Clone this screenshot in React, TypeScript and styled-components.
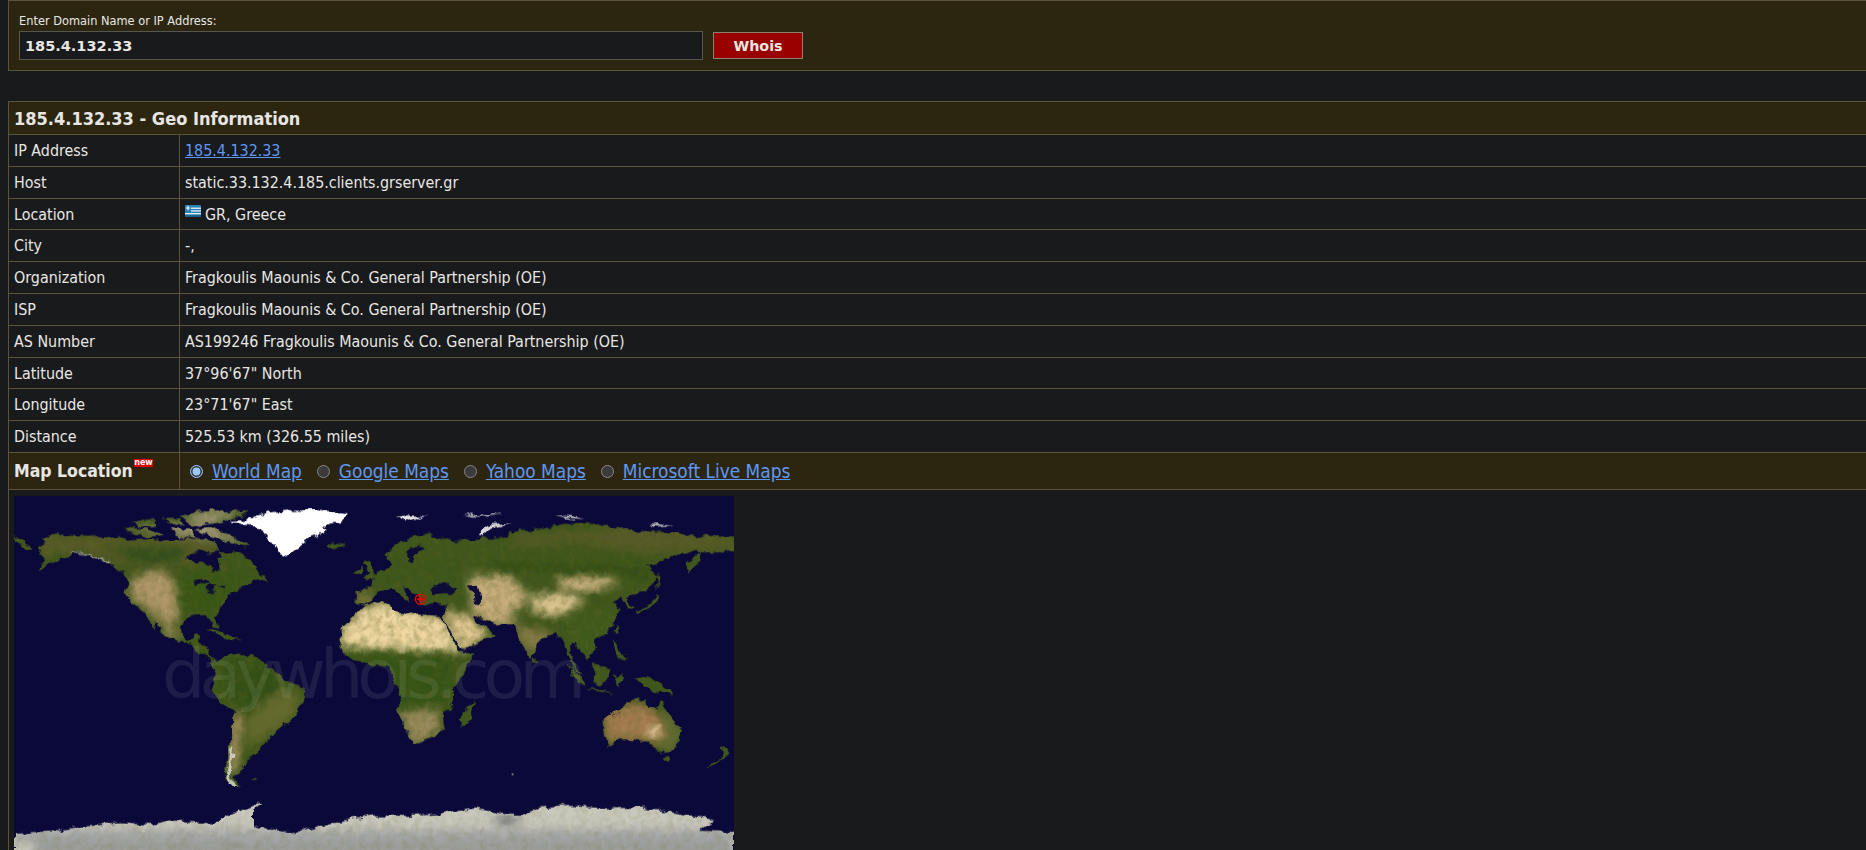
import React from "react";
import styled, { createGlobalStyle } from "styled-components";

const Global = createGlobalStyle`
  html, body { margin: 0; padding: 0; height: 850px; overflow: hidden; background: #181a1b; color-scheme: dark; }
`;

const bodyFont = `"DejaVu Sans Condensed", "DejaVu Sans", sans-serif`;
const line = "#5c5438";
const tan = "#2c2611";

const Page = styled.div`
  padding-left: 8px;
  color: #e8e6e3;
  font-family: ${bodyFont};
`;

const SearchPanel = styled.form`
  height: 71px;
  box-sizing: border-box;
  margin: 0 0 30px;
  padding: 14px 0 0 10px;
  background: ${tan};
  border: 1px solid ${line};
  border-right: 0;
`;

const FieldLabel = styled.label`
  display: block;
  height: 16px;
  font: 11.4px/13px "DejaVu Sans", sans-serif;
`;

const SearchRow = styled.div`
  display: flex;
  align-items: center;
  gap: 10px;
`;

const DomainInput = styled.input`
  width: 684px;
  height: 29px;
  box-sizing: border-box;
  padding: 0 0 0 5px;
  background: #181a1b;
  border: 1px solid #56564f;
  color: #e8e6e3;
  font: bold 14.5px "DejaVu Sans", sans-serif;
  outline: none;
`;

const WhoisButton = styled.button`
  width: 90px;
  height: 27px;
  padding: 0;
  background: #990000;
  border: 1px solid #8f7f70;
  color: #e8e6e3;
  font: bold 14.3px "DejaVu Sans", sans-serif;
`;

const GeoCard = styled.section`
  border-left: 1px solid ${line};
`;

const CardTitle = styled.h1`
  margin: 0;
  height: 34px;
  box-sizing: border-box;
  padding-left: 5px;
  background: ${tan};
  border-top: 1px solid ${line};
  border-bottom: 1px solid ${line};
  font: bold 18px/33px ${bodyFont};
`;

const InfoRow = styled.div`
  display: flex;
  height: 31.8px;
  box-sizing: border-box;
  border-bottom: 1px solid ${line};
  font-size: 15.9px;
  line-height: 31px;
`;

const KeyCell = styled.div`
  width: 171px;
  box-sizing: border-box;
  padding-left: 5px;
  border-right: 1px solid ${line};
`;

const ValueCell = styled.div`
  flex: 1;
  padding-left: 5px;
`;

const PlainLink = styled.a`
  color: #5f97f5;
  text-decoration: underline;
`;

const FlagIcon = styled.svg`
  width: 16px;
  height: 12px;
  margin-right: 4px;
  vertical-align: 3px;
`;

const MapRow = styled.div`
  display: flex;
  height: 37px;
  box-sizing: border-box;
  background: ${tan};
  border-bottom: 1px solid ${line};
`;

const MapKey = styled.div`
  position: relative;
  width: 171px;
  box-sizing: border-box;
  padding-left: 5px;
  border-right: 1px solid ${line};
  font: bold 17.5px/36px ${bodyFont};
`;

const NewBadge = styled.span`
  position: absolute;
  left: 125px;
  top: 6px;
  width: 19px;
  height: 8px;
  background: #e00000;
  color: #fff;
  font: bold 8px/7px "DejaVu Sans", sans-serif;
  text-align: center;
`;

const MapChoices = styled.div`
  display: flex;
  align-items: center;
  padding: 1px 0 0 10px;
  font-size: 18.9px;
`;

const MapChoice = styled.label`
  display: flex;
  align-items: center;
  margin-right: 15px;
`;

const MapRadio = styled.input`
  width: 13px;
  height: 13px;
  margin: 0 9px 0 0;
`;

const MapFrame = styled.div`
  padding: 6px 0 0 5px;
`;

const WorldSvg = styled.svg`
  display: block;
  width: 720px;
  height: 360px;
`;

type Frame = "NW" | "NE" | "SW" | "SE";
const frames: Record<Frame, string> = {
  NW: "translate(0 0)",
  NE: "translate(1080 0)",
  SW: "translate(0 525)",
  SE: "translate(1080 525)",
};

const ocean = "#0b0939";

const land: [Frame, string][] = [
  ["NW", "80,130 120,115 200,118 260,125 320,120 345,135 400,130 470,130 520,130 560,128 600,135 615,165 590,170 560,160 515,185 530,200 560,200 590,205 600,230 620,225 618,190 612,170 650,168 690,175 710,190 730,225 762,258 735,250 700,262 680,275 640,300 630,325 600,362 612,395 600,392 578,360 540,362 510,375 498,400 505,425 525,440 545,412 558,415 555,440 582,455 580,478 612,492 625,510 600,497 560,470 520,445 480,430 445,415 425,375 418,400 395,350 385,345 350,320 335,290 345,250 320,230 290,205 240,180 190,170 160,185 120,195 105,205 70,222 95,190 75,180 85,165 75,150 100,140"],
  ["NW", "0,125 30,135 60,150 40,155 0,140"],
  ["NW", "330,95 400,100 450,115 400,125 340,110"],
  ["NW", "345,82 420,68 425,90 380,92"],
  ["NW", "450,68 500,70 510,88 470,85"],
  ["NW", "470,100 530,100 540,125 500,125"],
  ["NW", "540,100 600,95 650,120 710,145 690,150 640,140 590,120"],
  ["NW", "500,60 560,45 640,45 705,45 680,60 620,80 530,92 520,75"],
  ["NW", "935,150 960,142 1000,148 985,155 955,160"],
  ["NW", "1020,230 1042,212 1045,232 1025,234"],
  ["NW", "1048,196 1065,190 1078,220 1080,245 1050,250 1062,228"],
  ["NW", "575,405 610,400 660,425 685,432 640,430 600,410"],
  ["NE", "-55,285 -20,278 -5,265 0,235 40,215 55,200 55,190 30,180 60,150 120,120 170,115 245,135 300,130 330,125 400,125 405,110 440,100 470,105 490,100 530,90 600,80 680,85 740,100 800,105 900,110 960,120 1020,120 1080,125 1080,165 1020,170 985,168 960,185 935,210 940,232 975,200 985,168 950,168 920,175 870,190 820,210 850,240 840,265 790,295 755,310 780,330 760,335 740,305 715,320 735,345 725,375 700,415 660,430 665,460 640,490 620,470 600,440 590,465 600,500 625,540 600,520 585,480 570,440 540,410 490,440 470,490 440,440 415,385 370,385 340,375 295,360 330,390 360,410 340,430 265,470 230,410 205,365 215,345 215,325 135,325 125,300 105,280 80,265 110,312 90,308 55,270 20,285 0,300 -25,325 -55,325"],
  ["NE", "-100,400 -60,360 -30,330 0,322 50,325 60,345 120,355 200,360 258,468 305,470 275,525 240,575 240,625 210,650 212,685 175,725 120,747 100,715 72,640 85,605 55,545 50,510 0,510 -20,500 -70,490 -100,455"],
  ["SW", "590,-20 650,-55 720,-45 780,0 830,30 870,55 865,85 835,150 790,170 745,230 700,265 680,300 660,320 685,345 650,345 630,320 640,260 655,170 660,125 620,95 595,50 605,10"],
  ["SE", "262,165 265,130 300,90 290,140 270,168"],
  ["SE", "682,150 730,125 760,95 790,85 815,90 825,115 850,110 858,85 880,125 920,175 915,210 885,245 850,245 825,215 790,205 740,205 700,225 690,190"],
  ["SE", "870,262 890,258 885,275 875,275"],
  ["SE", "1040,225 1070,245 1045,262 1003,295 1015,278 1045,258"],
  ["SE", "785,20 810,20 860,35 900,75 860,60 830,60 810,40"],
  ["SE", "582,-20 610,10 640,40 625,45 600,20"],
  ["SE", "630,50 680,60 720,68 680,66"],
  ["SE", "655,-20 710,-10 700,30 670,40 660,25"],
  ["SE", "720,15 750,10 735,45"],
  ["NE", "720,430 740,460 755,490 730,480"],
  ["NE", "785,345 830,325 850,290 852,310 835,330 790,352"],
  ["NE", "850,220 860,250 845,285 852,260"],
  ["NE", "480,480 490,500 478,505"],
  ["NE", "725,390 732,405 722,408"],
  ["SW", "715,322 733,324 722,330"],
];

const greenland = "650,75 700,70 760,50 830,42 900,40 1002,52 970,80 940,85 910,120 880,130 820,180 790,170 780,150 750,110 720,90 660,80";

const ice: [number, string][] = [
  [0.95, "65,62 105,58 160,60 125,70 95,80 85,70"],
  [0.9, "312,115 340,90 415,78 350,100 330,120"],
  [0.8, "270,55 325,58 390,52 340,62 290,62"],
  [0.9, "540,58 590,60 635,70 580,65"],
  [0.7, "820,85 860,85 900,90 850,95"],
];

const antarctica = "0,485 110,482 200,468 320,457 420,462 470,448 600,458 640,432 690,415 745,395 720,420 720,465 810,485 870,480 930,462 1010,445 1080,433 1180,435 1280,430 1380,412 1480,430 1520,432 1580,412 1660,405 1780,412 1880,410 1980,425 2100,447 2055,480 2160,482 2160,560 0,560";

const zones: [Frame, string, string][] = [
  ["NW", "80,120 560,120 620,170 530,210 330,210 190,165 80,180", "#575a28"],
  ["NW", "270,150 520,150 500,200 380,210", "#34501a"],
  ["NW", "395,225 440,220 490,260 500,340 470,400 430,370 400,340 345,300 355,250", "#b0976b"],
  ["NW", "430,370 480,390 500,430 460,420", "#948756"],
  ["NW", "500,230 720,230 640,300 600,360 510,360 490,290", "#385619"],
  ["NW", "520,430 620,500 560,470", "#385619"],
  ["NW", "330,95 710,145 600,95 500,50 700,40 600,80", "#a99e80"],
  ["NE", "-100,400 -30,330 50,325 120,350 200,360 270,465 130,465 -100,455", "#eed7a1"],
  ["NE", "205,340 300,365 340,420 265,465", "#e3c892"],
  ["NE", "-100,475 220,485 240,560 200,640 70,640 55,545 -70,505", "#365317"],
  ["NE", "75,645 200,640 190,710 120,750 90,690", "#9c8c60"],
  ["NE", "-55,285 -5,285 -15,325 -55,325", "#7d7440"],
  ["NE", "20,230 300,200 300,260 130,290 40,275", "#3c561b"],
  ["NE", "285,240 400,235 470,300 430,340 360,380 300,350 290,300", "#c6ad7c"],
  ["NE", "470,300 560,290 640,315 560,362 470,345", "#dcc490"],
  ["NE", "550,245 700,238 735,265 640,288 560,280", "#ccb381"],
  ["NE", "420,385 540,410 480,480 440,440", "#857a47"],
  ["NE", "590,350 730,330 720,400 640,480 590,440", "#3f5a1b"],
  ["NE", "280,340 420,350 420,390 340,375", "#c6ac7a"],
  ["NE", "300,200 800,210 850,260 740,230 540,225 400,225", "#324c18"],
  ["NE", "400,120 800,90 1080,125 1080,165 800,170 600,140 430,150", "#545a27"],
  ["SE", "690,130 780,95 830,110 900,170 890,230 830,210 740,205 700,220", "#a47b50"],
  ["SE", "820,165 860,165 860,200 825,200", "#e6cfa0"],
  ["SE", "860,90 925,180 885,245 850,240 880,180", "#5b6b30"],
  ["SW", "655,130 690,130 670,300 640,310", "#a58f60"],
  ["SW", "620,-40 790,-20 790,90 700,110 640,80", "#325014"],
  ["SW", "790,60 860,70 830,150 700,230 690,150", "#656a2d"],
];

const seas: string[] = [
  "168,280 190,262 215,262 250,280 240,295 195,290 175,295",
  "285,265 310,265 320,300 325,322 300,320 295,290",
  "198,365 203,363 266,462 259,466",
  "262,470 330,445 340,432 262,460",
  "100,170 125,150 150,150 120,180 115,205 100,200",
  "296,362 340,378 345,388 325,390",
  "-540,255 -500,250 -495,262 -535,268",
  "-495,268 -470,268 -480,285 -500,285",
  "-470,278 -440,272 -445,282",
];

const MapDrawing = () => (
  <WorldSvg viewBox="0 0 2160 1080" aria-label="World map">
    <defs>
      <clipPath id="land-shape">
        {land.map(([f, pts], i) => (
          <polygon key={i} points={pts} transform={frames[f]} />
        ))}
      </clipPath>
      <clipPath id="ice-shape">
        <polygon points={antarctica} transform={frames.SW} />
      </clipPath>
      <filter id="soft" x="-20%" y="-20%" width="140%" height="140%">
        <feGaussianBlur stdDeviation="12" />
      </filter>
      <filter id="mottle" x="0" y="0" width="100%" height="100%">
        <feTurbulence type="fractalNoise" baseFrequency="0.05" numOctaves="3" seed="4" />
        <feColorMatrix values="0 0 0 0 0.12  0 0 0 0 0.13  0 0 0 0 0.02  1.9 0 0 0 -0.72" />
      </filter>
      <filter id="rough" filterUnits="userSpaceOnUse" x="0" y="0" width="2160" height="1080">
        <feTurbulence type="fractalNoise" baseFrequency="0.035" numOctaves="3" seed="9" result="n" />
        <feDisplacementMap in="SourceGraphic" in2="n" scale="26" xChannelSelector="R" yChannelSelector="G" />
      </filter>
    </defs>
    <rect width="2160" height="1080" fill={ocean} />
    <g filter="url(#rough)">
      <g clipPath="url(#land-shape)">
        <rect width="2160" height="1080" fill="#3f561c" />
        {zones.map(([f, pts, c], i) => (
          <g key={i} transform={frames[f]}>
            <polygon points={pts} fill={c} filter="url(#soft)" />
          </g>
        ))}
        <rect width="2160" height="1080" filter="url(#mottle)" opacity="0.4" />
      </g>
      <polygon points={greenland} fill="#fff" />
      <g transform={frames.NE} fill="#eeeeea">
        {ice.map(([o, pts], i) => (
          <polygon key={i} points={pts} fillOpacity={o} />
        ))}
      </g>
      <g transform={frames.NW} fill="#cfcfcf" fillOpacity="0.6">
        <polygon points="170,168 230,174 290,199 288,204 230,178 170,172" />
      </g>
      <g transform={frames.SW} fill="#dfe0dc" fillOpacity="0.8">
        <polygon points="654,225 658,228 645,320 672,344 650,345 634,320" />
      </g>
      <g transform={frames.NE} fill={ocean}>
        {seas.map((pts, i) => (
          <polygon key={i} points={pts} />
        ))}
      </g>
      <g clipPath="url(#ice-shape)">
        <rect width="2160" height="1080" fill="#c9c8bd" />
        <g filter="url(#soft)">
          <rect y="1000" width="2160" height="40" fill="#a4a6a6" />
          <rect x="60" y="1040" width="2100" height="40" fill="#9a9b98" />
          <ellipse cx="1480" cy="975" rx="45" ry="8" fill="#3d4252" />
        </g>
        <rect width="2160" height="1080" filter="url(#mottle)" opacity="0.18" />
      </g>
    </g>
    <text x="444" y="606" textLength="1272" fontFamily="'DejaVu Sans', sans-serif" fontSize="205" fill="#ffffff" fillOpacity="0.08">
      daywhois.com
    </text>
    <g transform={frames.NE} fill="none" stroke="#f00000" strokeWidth="4">
      <circle cx="139" cy="310" r="15" />
      <path d="M129 310h20M139 301v18" strokeWidth="6" />
    </g>
    <circle cx="1496" cy="835" r="2.5" fill="#eee" />
  </WorldSvg>
);

const rows: [string, React.ReactNode][] = [
  ["IP Address", <PlainLink href="#">185.4.132.33</PlainLink>],
  ["Host", "static.33.132.4.185.clients.grserver.gr"],
  [
    "Location",
    <>
      <FlagIcon viewBox="0 0 16 12" aria-label="Greek flag">
        <rect width="16" height="12" rx="1" fill="#2a7fb4" />
        <rect y="2.6" x="6" width="10" height="1.3" fill="#e8f4fb" />
        <rect y="5.3" x="6" width="10" height="1.3" fill="#e8f4fb" />
        <rect y="8" width="16" height="1.3" fill="#e8f4fb" />
        <path d="M3 0.8v4.4M0.8 3h4.4" stroke="#e8f4fb" strokeWidth="1.2" />
        <rect y="10.2" width="16" height="1.8" fill="#1b5f8c" />
      </FlagIcon>
      GR, Greece
    </>,
  ],
  ["City", "-,"],
  ["Organization", "Fragkoulis Maounis & Co. General Partnership (OE)"],
  ["ISP", "Fragkoulis Maounis & Co. General Partnership (OE)"],
  ["AS Number", "AS199246 Fragkoulis Maounis & Co. General Partnership (OE)"],
  ["Latitude", "37°96'67\" North"],
  ["Longitude", "23°71'67\" East"],
  ["Distance", "525.53 km (326.55 miles)"],
];

const maps = ["World Map", "Google Maps", "Yahoo Maps", "Microsoft Live Maps"];

export default function App() {
  return (
    <Page>
      <Global />
      <SearchPanel>
        <FieldLabel htmlFor="domain">Enter Domain Name or IP Address:</FieldLabel>
        <SearchRow>
          <DomainInput id="domain" defaultValue="185.4.132.33" />
          <WhoisButton type="button">Whois</WhoisButton>
        </SearchRow>
      </SearchPanel>
      <GeoCard>
        <CardTitle>185.4.132.33 - Geo Information</CardTitle>
        {rows.map(([k, v]) => (
          <InfoRow key={k}>
            <KeyCell>{k}</KeyCell>
            <ValueCell>{v}</ValueCell>
          </InfoRow>
        ))}
        <MapRow>
          <MapKey>
            Map Location<NewBadge>new</NewBadge>
          </MapKey>
          <MapChoices>
            {maps.map((m, i) => (
              <MapChoice key={m}>
                <MapRadio type="radio" name="map" defaultChecked={i === 0} />
                <PlainLink href="#">{m}</PlainLink>
              </MapChoice>
            ))}
          </MapChoices>
        </MapRow>
        <MapFrame>
          <MapDrawing />
        </MapFrame>
      </GeoCard>
    </Page>
  );
}
